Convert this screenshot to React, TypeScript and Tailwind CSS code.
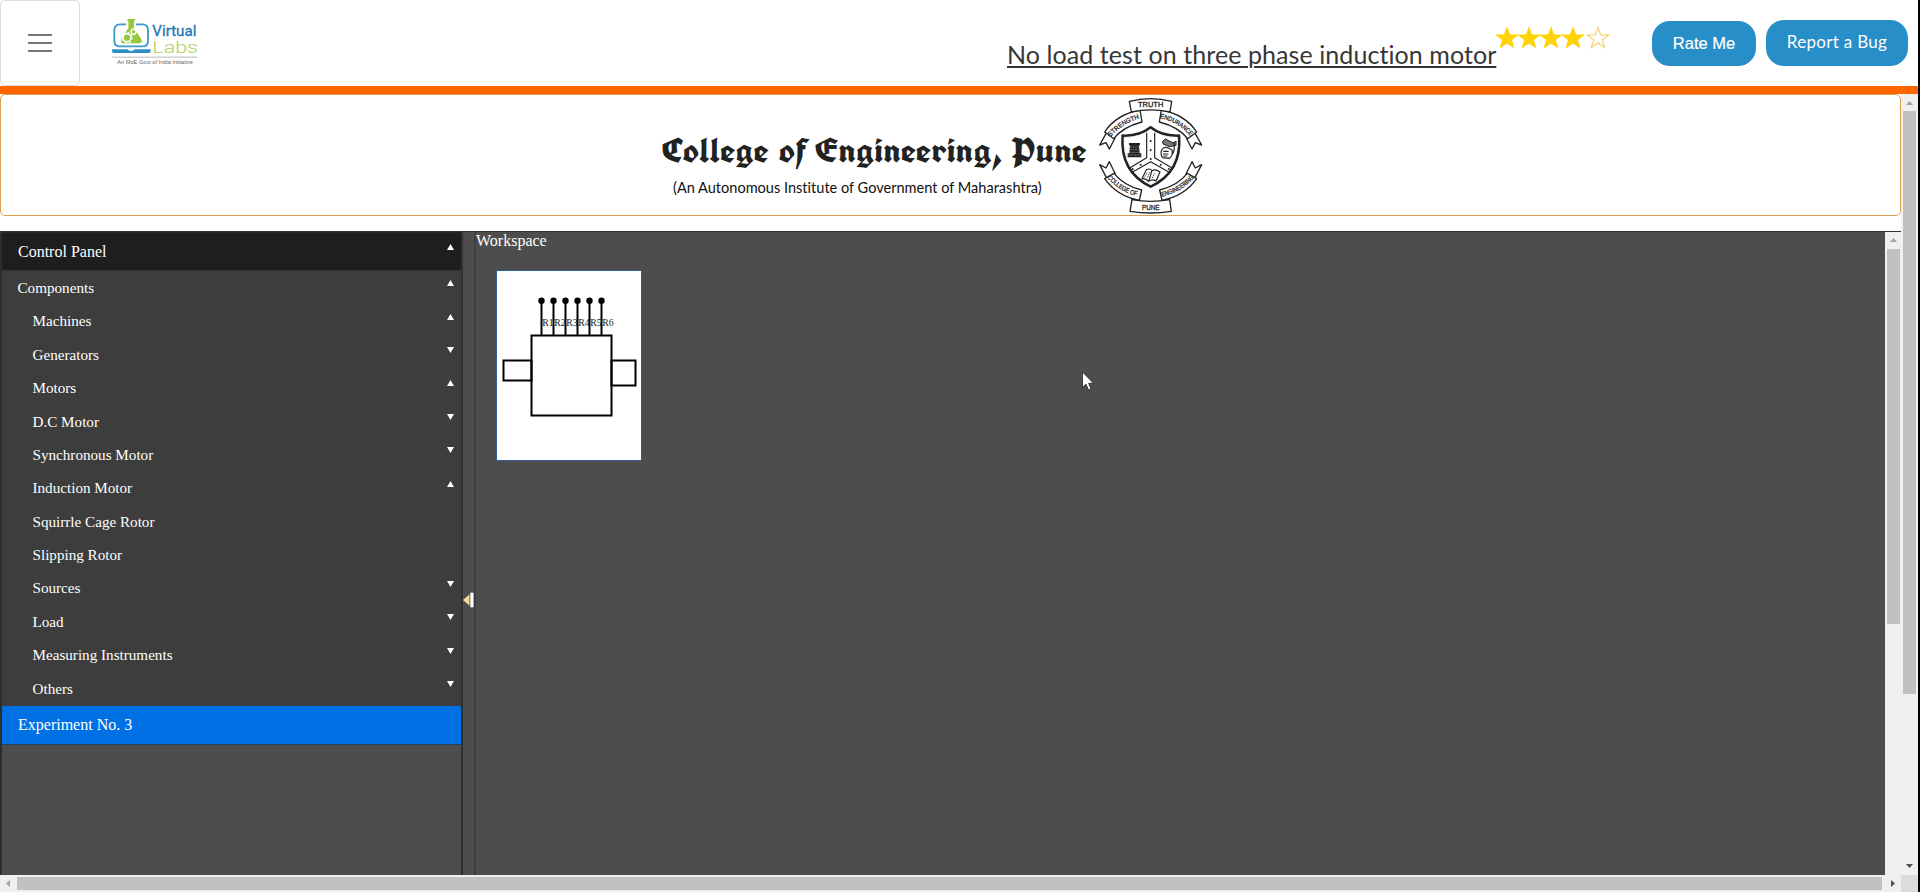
import React from "react";

type Arrow = "up" | "down" | null;

const items: { label: string; arrow: Arrow }[] = [
  { label: "Machines", arrow: "up" },
  { label: "Generators", arrow: "down" },
  { label: "Motors", arrow: "up" },
  { label: "D.C Motor", arrow: "down" },
  { label: "Synchronous Motor", arrow: "down" },
  { label: "Induction Motor", arrow: "up" },
  { label: "Squirrle Cage Rotor", arrow: null },
  { label: "Slipping Rotor", arrow: null },
  { label: "Sources", arrow: "down" },
  { label: "Load", arrow: "down" },
  { label: "Measuring Instruments", arrow: "down" },
  { label: "Others", arrow: "down" },
];

function Caret({ dir }: { dir: Arrow }) {
  if (!dir) return null;
  return (
    <svg className="mb-[10px] h-[6px] w-[7px]" viewBox="0 0 7 6" fill="#fff">
      <path d={dir === "up" ? "M3.5 0L7 6H0z" : "M0 0h7L3.5 6z"} />
    </svg>
  );
}

function VirtualLabsLogo() {
  return (
    <svg className="h-[50px] w-[90px]" viewBox="330 52 270 150">
      <path d="M378 74H360Q343 74 343 91V123Q343 140 360 140H427Q444 140 444 123V91Q444 74 427 74H408" fill="none" stroke="#3d9bcb" strokeWidth="5.5" />
      <path d="M336 149H382Q385 154 393 154T404 149H452V155Q452 160 446 160H342Q336 160 336 155z" fill="#2f8fc4" />
      <path d="M382 58H405V63H402V85L424 119Q429 131 417 131H371Q359 131 364 119L385 85V63H382z" fill="#97c93d" />
      <circle cx="381" cy="114" r="12" fill="none" stroke="#fff" strokeWidth="5" />
      <circle cx="381" cy="114" r="15.5" fill="none" stroke="#fff" strokeWidth="4" strokeDasharray="5 7.2" />
      <circle cx="401" cy="96" r="7" fill="none" stroke="#fff" strokeWidth="4" />
      <circle cx="401" cy="96" r="10" fill="none" stroke="#fff" strokeWidth="3" strokeDasharray="3.5 4.4" />
      <text x="457" y="108" textLength="132" lengthAdjust="spacingAndGlyphs" fontSize="46" fontFamily="Roboto, sans-serif" fill="#2678b2" stroke="#2678b2" strokeWidth="1">Virtual</text>
      <text x="457" y="159" textLength="137" lengthAdjust="spacingAndGlyphs" fontSize="50" fontWeight="300" fontFamily="Roboto, sans-serif" fill="#a9d15c">Labs</text>
      <path d="M336 172.500H592" stroke="#aaa" strokeWidth="2.500" />
      <text x="352" y="193" textLength="227" lengthAdjust="spacingAndGlyphs" fontSize="16" fontFamily="Liberation Sans, sans-serif" fill="#666">An MoE Govt of India Initiative</text>
    </svg>
  );
}

function Star({ filled }: { filled: boolean }) {
  return (
    <svg className={filled ? "h-[22px] w-[22px] overflow-visible" : "ml-[3px] h-[22px] w-[22px] overflow-visible"} viewBox="0 0 22 22">
      <path
        d="M11 0.500L13.700 8H21.800L15.400 12.900L17.700 20.500L11 16L4.300 20.500L6.600 12.900L0.200 8H8.300Z"
        fill={filled ? "#ffd306" : "#fff"}
        stroke={filled ? "#ffd306" : "#f6cf62"}
        strokeWidth={filled ? 1 : 1.1}
      />
    </svg>
  );
}

function Crest() {
  return (
    <svg className="mt-px h-[120px] w-[109px]" viewBox="50 22 327 360" fill="#fff" stroke="#222" strokeWidth="4" strokeLinejoin="round">
      <path d="M178 62L158 70L162 96L178 88zM250 62L270 70L266 96L250 88zM178 340L158 332L162 306L182 314zM250 340L270 332L266 306L246 314z" fill="#111" />
      <path d="M84 128L61 169L80 162L90 181L107 148z" />
      <path d="M344 128L367 169L348 162L338 181L321 148z" />
      <path d="M84 272L61 228L80 238L90 219L108 256z" />
      <path d="M344 272L367 228L348 238L338 219L320 256z" />
      <path d="M76 130Q110 78 182 64L188 100Q132 114 103 150Z" />
      <path d="M352 130Q318 78 246 64L240 100Q296 114 325 150Z" />
      <path d="M76 270Q112 322 180 335L187 304Q132 290 104 254Z" />
      <path d="M352 270Q316 322 248 335L241 304Q296 290 324 254Z" />
      <path d="M150 38Q214 22 277 38L272 70Q214 57 156 70Z" />
      <path d="M152 368Q214 378 276 368L271 333Q214 343 158 333Z" />
      <path d="M130 141Q181 143 214 116Q247 143 299 141Q308 250 214 294Q122 250 130 141Z" strokeWidth="8" />
      <path d="M134 146Q181 147 214 122Q247 147 294 146Q301 246 214 287Q129 246 134 146Z" stroke="#ddd" strokeWidth="1.500" />
      <path d="M202 132V207L147 240M226 132V207L282 240M156 252L214 219L272 252" fill="none" strokeWidth="3.500" />
      <g fill="#222" stroke="none">
        <circle cx="214" cy="157" r="3" /><circle cx="214" cy="184" r="3" /><circle cx="214" cy="211" r="3" />
        <circle cx="184" cy="228" r="3" /><circle cx="244" cy="228" r="3" /><circle cx="160" cy="241" r="3" /><circle cx="268" cy="241" r="3" />
        <path d="M149 163H182V170H179L181 194H186V206H145V194H150L152 170H149z" />
      </g>
      <path d="M152 175H180M151 183H181M150 191H182M148 199H184" stroke="#bbb" strokeWidth="1.500" strokeDasharray="6 2" />
      <path d="M250 158L258 151L282 163L290 157V170L271 174L251 166z" fill="#777" strokeWidth="3" />
      <path d="M247 184Q254 172 268 178L278 184Q282 200 270 209L250 207Q242 197 247 184zM282 160Q290 184 276 202M252 188H268M251 196H267M252 202H264" strokeWidth="3.500" fill="none" />
      <path d="M188 270L201 243Q212 238 218 246Q228 240 242 250L230 277Q219 270 208 278Q200 268 188 270zM218 246L208 278" strokeWidth="3.500" />
      <path d="M203 252L196 266M211 250L204 268M226 254L219 268" strokeWidth="2.500" strokeDasharray="4 2" />
      <defs>
        <path id="ribbon-nw" d="M94 145Q128 104 186 88" />
        <path id="ribbon-ne" d="M242 88Q300 102 336 146" />
        <path id="ribbon-sw" d="M84 267Q122 311 180 324" />
        <path id="ribbon-se" d="M248 324Q306 311 347 265" />
      </defs>
      <g fill="#222" stroke="none" fontFamily="Liberation Sans, sans-serif" fontWeight="400" fontSize="20">
        <text x="176" y="55" textLength="76" lengthAdjust="spacingAndGlyphs" stroke="#222" strokeWidth="0.800">TRUTH</text>
        <text x="188" y="363" textLength="52" lengthAdjust="spacingAndGlyphs" stroke="#222" strokeWidth="0.800">PUNE</text>
        <text textLength="104" lengthAdjust="spacingAndGlyphs" stroke="#222" strokeWidth="0.800"><textPath href="#ribbon-nw">STRENGTH</textPath></text>
        <text textLength="108" lengthAdjust="spacingAndGlyphs" stroke="#222" strokeWidth="0.800"><textPath href="#ribbon-ne">ENDURANCE</textPath></text>
        <text textLength="106" lengthAdjust="spacingAndGlyphs" stroke="#222" strokeWidth="0.800"><textPath href="#ribbon-sw">COLLEGE OF</textPath></text>
        <text textLength="114" lengthAdjust="spacingAndGlyphs" stroke="#222" strokeWidth="0.800"><textPath href="#ribbon-se">ENGINEERING</textPath></text>
      </g>
    </svg>
  );
}

function MotorDiagram() {
  const pins = [1, 2, 3, 4, 5, 6];
  return (
    <svg className="block h-[189px] w-[144px]" viewBox="1 1 144 189" fill="none" stroke="#000" strokeWidth="2">
      <rect x="7.500" y="90.500" width="28" height="20" />
      <rect x="115.500" y="90.500" width="24" height="25" />
      <rect x="35.500" y="65.500" width="80" height="80" />
      {pins.map((n) => (
        <g key={n}>
          <path d={`M${33.5 + n * 12} 31V65`} />
          <circle cx={33.5 + n * 12} cy="30.700" r="3.200" fill="#000" stroke="none" />
          <text x={34.3 + n * 12} y="55.700" fontSize="9.800" fontFamily="Liberation Serif, serif" fill="#222" stroke="none">R{n}</text>
        </g>
      ))}
    </svg>
  );
}

export default function App() {
  return (
    <div className="flex h-[892px] w-[1920px] overflow-hidden bg-black">
      <div className="relative flex w-[1918px] flex-col bg-white">
        <header className="flex h-[86px] shrink-0 items-start">
          <button className="flex h-[86px] w-[80px] items-center justify-center rounded-[5px] border border-[#dddddd]">
            <svg className="h-[18px] w-[24px]" viewBox="0 0 24 18" stroke="#777" strokeWidth="2">
              <path d="M0 1H24M0 9H24M0 17H24" />
            </svg>
          </button>
          <div className="ml-[30px] mt-[17px]">
            <VirtualLabsLogo />
          </div>
          <h1 className="ml-[807px] mt-[36px] w-[489px] whitespace-nowrap font-['Lato',sans-serif] text-[25px] leading-[36px] tracking-[0.075px] text-[#373737] underline decoration-2 underline-offset-[2px] [font-variant-ligatures:none]">
            No load test on three phase induction motor
          </h1>
          <div className="mt-[27px] flex w-[156px]">
            {[1, 2, 3, 4, 5].map((n) => (
              <Star key={n} filled={n < 5} />
            ))}
          </div>
          <button className="mt-[21px] h-[45px] w-[104px] whitespace-nowrap rounded-[18px] bg-[#288ec8] font-['Liberation_Sans',sans-serif] text-[16.500px] text-white [-webkit-text-stroke:0.2px_#fff]">
            Rate Me
          </button>
          <button className="ml-[10px] mt-[20px] h-[46px] w-[142px] whitespace-nowrap rounded-[18px] bg-[#288ec8] pb-[2px] font-['Lato',sans-serif] text-[17px] tracking-[0.300px] text-white [font-variant-ligatures:none]">
            Report a Bug
          </button>
        </header>
        <div className="h-[8px] shrink-0 bg-[#ff6600]" />

        <div className="flex min-h-0 flex-1">
          <div className="flex w-[1901px] flex-col">
            <section className="flex h-[122px] shrink-0 items-start rounded-[5px] border border-[#d9a050] pl-[655px]">
              <div className="w-[440px] pt-[33px]">
                <svg className="block h-[46px] w-[436px]" viewBox="0 0 436 46">
                  <text x="6" y="35" textLength="425" lengthAdjust="spacingAndGlyphs" fontFamily="Old English Text MT, UnifrakturCook, Liberation Serif, serif" fontWeight="700" fontSize="33" fill="#222">
                    College of Engineering, Pune
                  </text>
                </svg>
                <p className="ml-[17px] mt-[4px] whitespace-nowrap font-['Lato',sans-serif] text-[14.550px] leading-[20px] text-[#111] [font-variant-ligatures:none]">
                  (An Autonomous Institute of Government of Maharashtra)
                </p>
              </div>
              <Crest />
            </section>
            <div className="mt-[15px] flex min-h-0 flex-1 border-t border-[#333]">
              <aside className="flex w-[463px] flex-col border-r-2 border-l-2 border-l-[#2d2d2d] border-r-[#303030] bg-[#4d4d4d] font-['Liberation_Serif',serif] text-white">
                <div className="flex h-[38px] shrink-0 items-center justify-between border-t border-[#282828] bg-[#1e1e1e] pr-[7px] pl-4 text-base">
                  Control Panel
                  <Caret dir="up" />
                </div>
                <div className="h-[436px] shrink-0 border-t border-[#333] bg-[#3d3d3d] text-[15.150px]">
                  <div className="flex h-[34px] items-center justify-between pr-[7px] pl-[15.500px]">
                    Components
                    <Caret dir="up" />
                  </div>
                  {items.map((it) => (
                    <div key={it.label} className="flex h-[33.400px] items-center justify-between pr-[7px] pl-[30.500px]">
                      {it.label}
                      <Caret dir={it.arrow} />
                    </div>
                  ))}
                </div>
                <div className="flex h-[39px] shrink-0 items-center border-b border-[#26415f] bg-[#0071e5] pl-4 text-base">
                  Experiment No. 3
                </div>
              </aside>
              <div className="flex w-[13px] items-center justify-end border-r-2 border-[#3d3d3d] bg-[#4d4d4d] pt-[92px]">
                <svg className="h-[18px] w-[12px]" viewBox="0 0 12 18">
                  <path d="M0 9L7 3V15z" fill="#f7dc93" />
                  <rect x="8" y="1" width="3.500" height="16" fill="#fff" />
                </svg>
              </div>
              <main className="w-[1409px] bg-[#4d4d4d] font-['Liberation_Serif',serif] text-base leading-[18px] text-white">
                <div className="h-[38px]">Workspace</div>
                <div className="ml-5 h-[191px] w-[146px] border border-[#2f5f98] bg-white">
                  <MotorDiagram />
                </div>
              </main>
              <div className="flex w-4 flex-col items-center bg-[#f0f0f0]">
                <svg className="mt-[6px] h-[4px] w-[7px]" viewBox="0 0 7 4"><path d="M3.500 0L7 4H0z" fill="#a3a3a3" /></svg>
                <div className="mt-[7px] ml-px h-[375px] w-[13px] bg-[#c1c1c1]" />
              </div>
            </div>
            <div className="flex h-[17px] shrink-0 items-center bg-[#f0f0f0]">
              <svg className="ml-[6px] h-[7px] w-[4px]" viewBox="0 0 4 7"><path d="M0 3.500L4 0V7z" fill="#a3a3a3" /></svg>
              <div className="ml-[7px] h-[13px] w-[1865px] bg-[#c1c1c1]" />
              <svg className="ml-[9px] h-[7px] w-[4px]" viewBox="0 0 4 7"><path d="M4 3.500L0 0V7z" fill="#505050" /></svg>
            </div>
          </div>
          <div className="flex w-[17px] flex-col items-center bg-[#f0f0f0]">
            <svg className="mt-[7px] h-[4px] w-[7px]" viewBox="0 0 7 4"><path d="M3.500 0L7 4H0z" fill="#a3a3a3" /></svg>
            <div className="mt-[6px] h-[583px] w-[13px] bg-[#c1c1c1]" />
            <svg className="mt-auto mb-[7px] h-[4px] w-[7px]" viewBox="0 0 7 4"><path d="M3.500 4L7 0H0z" fill="#505050" /></svg>
            <div className="h-[17px] w-[17px] bg-[#dcdcdc]" />
          </div>
        </div>
        <svg className="absolute top-[371px] left-[1082px] h-[20px] w-[12px]" viewBox="0 0 12 20">
          <path d="M0.500 1V16.500L4 13.200L6.500 19L9 18L6.600 12.300H11.500z" fill="#fff" stroke="#222" strokeWidth="0.800" />
        </svg>
      </div>
    </div>
  );
}
